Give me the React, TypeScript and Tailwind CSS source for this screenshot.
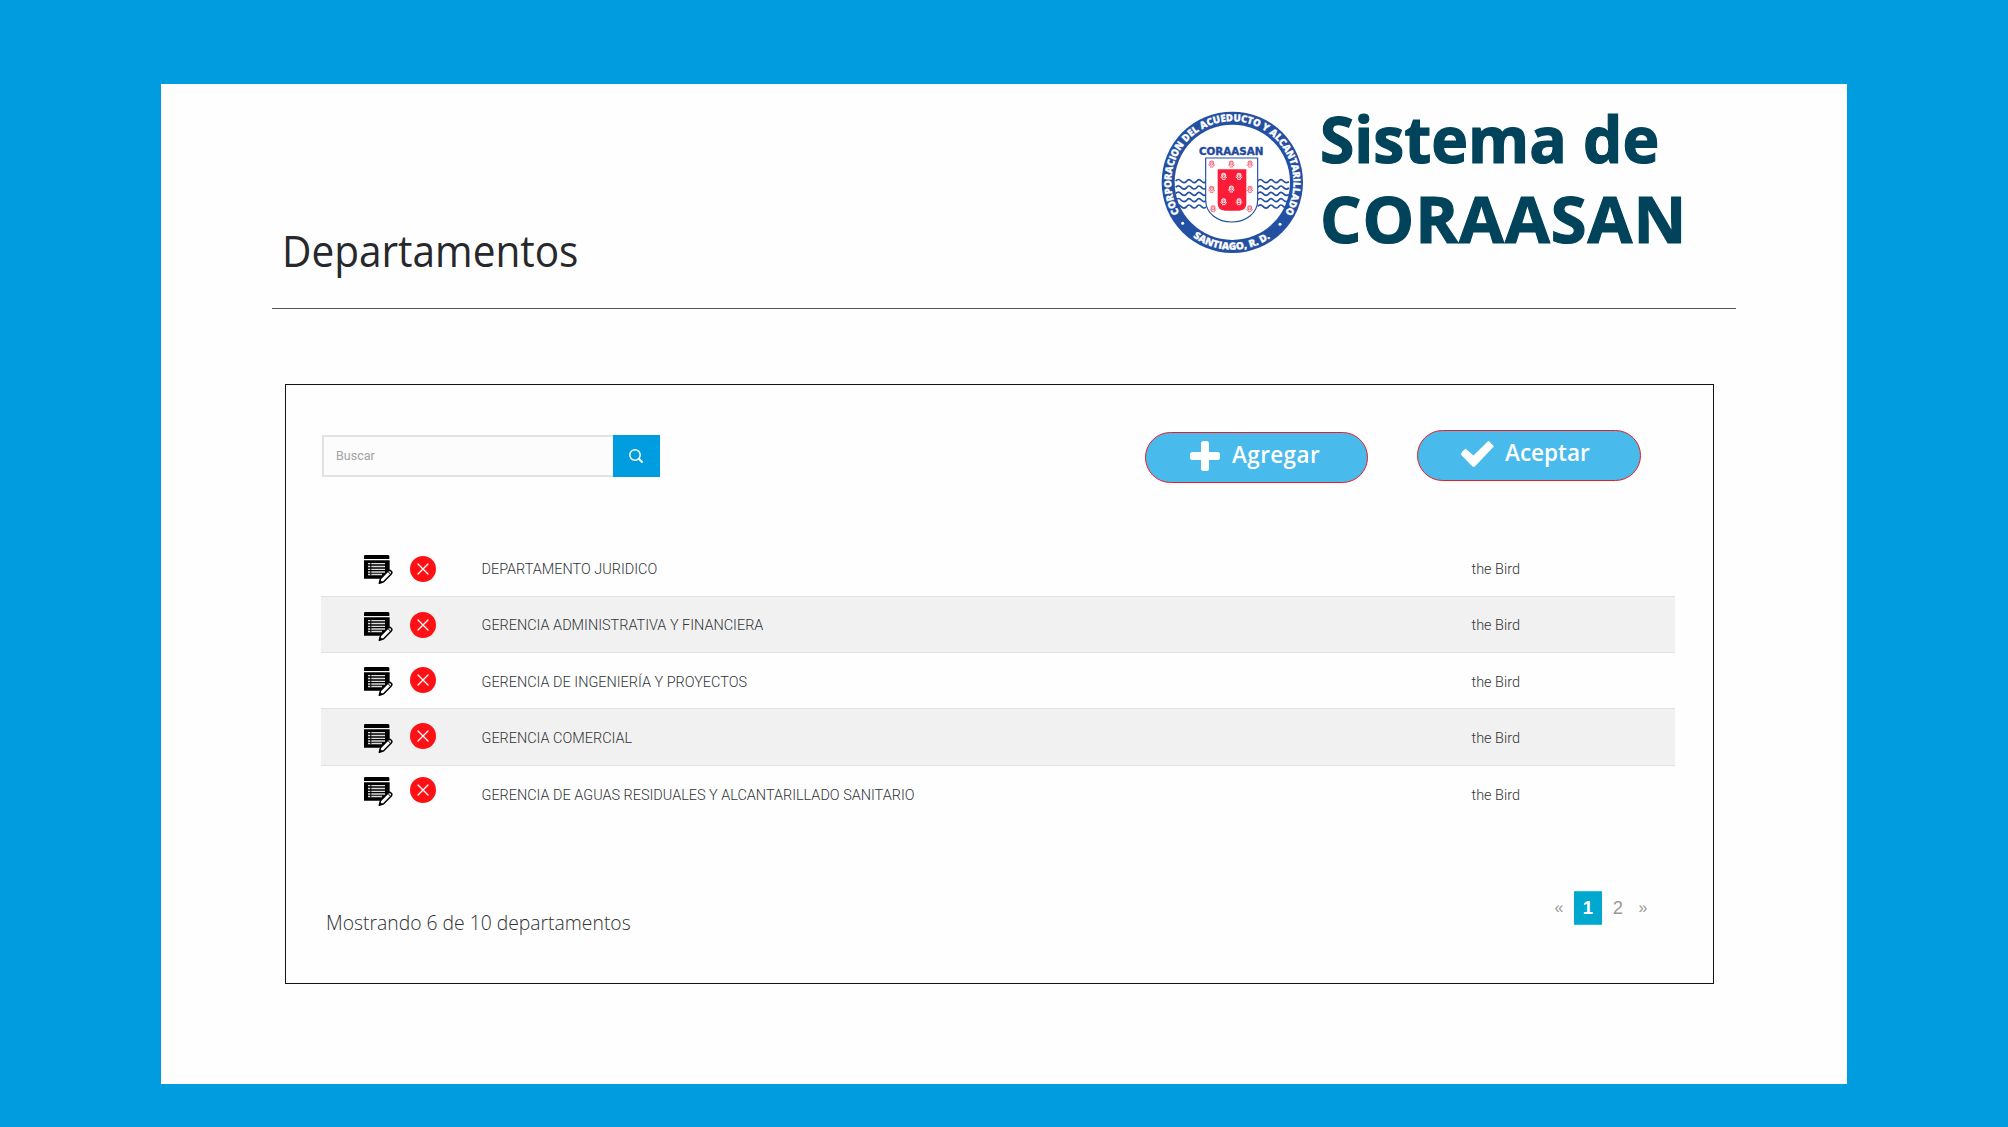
type Department = {
  name: string;
  owner: string;
  row: string;
  edit: string;
  remove: string;
  text: string;
};

const departments: Department[] = [
  {
    name: "DEPARTAMENTO JURIDICO",
    owner: "the Bird",
    row: "h-14 border-transparent",
    edit: "mt-[14px]",
    remove: "mt-[15px]",
    text: "mt-[19px]",
  },
  {
    name: "GERENCIA ADMINISTRATIVA Y FINANCIERA",
    owner: "the Bird",
    row: "h-14 border-[#dfe3e8] bg-[#f1f1f1]",
    edit: "mt-[15px]",
    remove: "mt-[15px]",
    text: "mt-[19px]",
  },
  {
    name: "GERENCIA DE INGENIERÍA Y PROYECTOS",
    owner: "the Bird",
    row: "h-14 border-[#dfe3e8]",
    edit: "mt-[14px]",
    remove: "mt-[14px]",
    text: "mt-[20px]",
  },
  {
    name: "GERENCIA COMERCIAL",
    owner: "the Bird",
    row: "h-[57px] border-[#dfe3e8] bg-[#f1f1f1]",
    edit: "mt-[15px]",
    remove: "mt-[14px]",
    text: "mt-[20px]",
  },
  {
    name: "GERENCIA DE AGUAS RESIDUALES Y ALCANTARILLADO SANITARIO",
    owner: "the Bird",
    row: "h-14 border-[#dfe3e8]",
    edit: "mt-[11px]",
    remove: "mt-[11px]",
    text: "mt-[20px]",
  },
];

const redShells = [
  [188, 192], [247, 192], [303, 192], [188, 268], [303, 268], [192, 326], [302, 326],
];
const whiteShells = [
  [224, 229], [270, 229], [247, 267], [224, 305], [270, 305],
];
const waveRows = [243, 262, 281, 300, 319];

function Shell({ x, y, color, hinge }: { x: number; y: number; color: string; hinge: string }) {
  return (
    <g transform={`translate(${x} ${y})`}>
      <circle cx="0" cy="-3" r="7.5" fill={color} />
      <path d="M-4 -5 L0 2 L4 -5 M0 -8 V2" stroke={hinge} strokeWidth="1.4" fill="none" />
      <path d="M-10 2 L-3 7 M10 2 L3 7 M-5 9 H5" stroke={color} strokeWidth="3" fill="none" />
    </g>
  );
}

function Emblem() {
  const family = "'Open Sans', 'Liberation Sans', sans-serif";
  return (
    <svg viewBox="36 33 426 426" className="-ml-px mt-[27px] size-[142px] shrink-0">
      <defs>
        <path id="ring-top" d="M91.6 338.5 A183 183 0 1 1 408.4 338.5" />
        <path id="ring-bottom" d="M130 410 A202 202 0 0 0 370 410" />
      </defs>
      <circle cx="250" cy="247" r="212" fill="#2450a4" />
      <circle cx="250" cy="247" r="173" fill="#fff" />
      <text fill="#fff" stroke="#fff" strokeWidth="0.8" fontFamily={family} fontWeight="800" fontSize="30">
        <textPath href="#ring-top" startOffset="0" textLength="768" lengthAdjust="spacingAndGlyphs">
          CORPORACION DEL ACUEDUCTO Y ALCANTARILLADO
        </textPath>
      </text>
      <text fill="#fff" stroke="#fff" strokeWidth="0.8" fontFamily={family} fontWeight="800" fontSize="30">
        <textPath href="#ring-bottom" startOffset="2" textLength="248" lengthAdjust="spacingAndGlyphs">
          SANTIAGO, R. D.
        </textPath>
      </text>
      <circle cx="101" cy="370" r="4.500" fill="#fff" />
      <circle cx="393" cy="373" r="4.500" fill="#fff" />
      <g fill="none" stroke="#2450a4" strokeWidth="5">
        {waveRows.map((y) => (
          <g key={y}>
            <path d={`M80 ${y} q8 -9 16 0 t16 2 q7 -11 15 -2 t15 2 q7 -11 15 -2 t14 2`} />
            <path d={`M326 ${y} q8 -9 16 0 t16 2 q7 -11 15 -2 t15 2 q7 -11 15 -2 t17 2`} />
          </g>
        ))}
      </g>
      <path
        d="M170 174 H326 V300 C326 342 288 366 248 366 C208 366 170 342 170 300 Z"
        fill="#fff"
        stroke="#2450a4"
        strokeWidth="3.500"
      />
      <path d="M206 208 H292 V310 Q292 332 270 332 H228 Q206 332 206 310 Z" fill="#fb1c38" />
      {redShells.map(([x, y]) => (
        <Shell key={`${x}-${y}`} x={x} y={y} color="#f5707f" hinge="#fff" />
      ))}
      {whiteShells.map(([x, y]) => (
        <Shell key={`${x}-${y}`} x={x} y={y} color="#ffe3e6" hinge="#fb1c38" />
      ))}
      <text
        x="150"
        y="166"
        fill="#1f4a9c"
        stroke="#1f4a9c"
        strokeWidth="1.2"
        fontFamily="'DejaVu Sans', sans-serif"
        fontWeight="700"
        fontSize="29"
        textLength="193"
        lengthAdjust="spacingAndGlyphs"
      >
        CORAASAN
      </text>
    </svg>
  );
}

function EditIcon() {
  return (
    <svg viewBox="0 0 87 87" className="size-[29px]">
      <path d="M0 12 V4 Q0 0 4 0 H72 Q76 0 76 4 V12 Z" fill="#000" />
      <path d="M0 16 H77 V60 L58 71 H0 Z" fill="#000" />
      <path
        d="M12 26 H63 M12 34.500 H63 M12 43 H63 M12 51 H63 M12 58.500 H54"
        stroke="#dadada"
        strokeWidth="4"
      />
      <path d="M20.500 24 V61" stroke="#000" strokeWidth="3" />
      <path
        d="M46 84.500 L49.500 71 L73 47.500 Q77 44.500 81 48 Q85.500 52 82.500 56 L59 80 Z"
        fill="#fff"
        stroke="#000"
        strokeWidth="4.500"
        strokeLinejoin="round"
      />
      <path d="M46 85 L48.500 75 L56 82 Z" fill="#000" />
      <path d="M72 50 L80 58" stroke="#000" strokeWidth="3" />
    </svg>
  );
}

function DeleteIcon() {
  return (
    <svg viewBox="0 0 26 26" className="size-[26px]">
      <circle cx="13" cy="13" r="13" fill="#fd1114" />
      <path d="M8 8 L18 18 M18 8 L8 18" stroke="#fff" strokeWidth="1.300" strokeLinecap="round" />
    </svg>
  );
}

function Header() {
  return (
    <header className="ml-[111px] flex h-[225px] w-[1464px] items-start border-b border-[#555558]">
      <div className="min-w-0 flex-1 pl-[10px] pt-[137px]">
        <h1 className="inline-block origin-left scale-x-[0.943] whitespace-nowrap font-['Open_Sans',sans-serif] text-[43px] font-normal leading-[60px] text-[#27282b]">
          Departamentos
        </h1>
      </div>
      <Emblem />
      <div className="ml-[17px] mr-9 mt-[14px] w-[380px] shrink-0 font-['Open_Sans',sans-serif] text-[65px] font-bold leading-[80px] text-[#01435a] [-webkit-text-stroke:1.2px_#01435a]">
        <div className="origin-left scale-x-[0.958] whitespace-nowrap">Sistema de</div>
        <div className="whitespace-nowrap tracking-[1px]">CORAASAN</div>
      </div>
    </header>
  );
}

function Toolbar() {
  return (
    <div className="ml-9 mr-[72px] flex items-start pt-[45px]">
      <div className="mt-[5px] flex h-[42px] w-[338px]">
        <div className="flex flex-1 items-center border-2 border-r-0 border-[#e2e2e2] bg-[#fcfcfc] pl-[12px] font-[Roboto,sans-serif] text-[12.5px] text-[#a3a3a3]">
          Buscar
        </div>
        <button className="flex w-[47px] items-center justify-center bg-[#009ce0] pr-px">
          <svg viewBox="0 0 14 14" className="size-[14px]" fill="none" stroke="#fff">
            <circle cx="6" cy="6" r="5.200" strokeWidth="1.500" />
            <path d="M9.800 9.800 L13 13" strokeWidth="2" strokeLinecap="round" />
          </svg>
        </button>
      </div>
      <div className="ml-auto flex items-start gap-[49px] font-['Open_Sans',sans-serif] text-[22.5px] font-semibold leading-[30px] text-white">
        <button className="mt-[2px] flex h-[51px] w-[223px] items-start rounded-full border border-[#ee1b24] bg-[#48baeb] pl-11">
          <svg viewBox="0 0 30 30" className="mt-2 size-[30px]" fill="#fff">
            <rect x="11" y="0" width="8" height="30" rx="2.500" />
            <rect x="0" y="11" width="30" height="8" rx="2.500" />
          </svg>
          <span className="ml-3 mt-[7px] tracking-[0.4px]">Agregar</span>
        </button>
        <button className="flex h-[51px] w-[224px] items-start rounded-full border border-[#ee1b24] bg-[#48baeb] pl-[43px]">
          <svg viewBox="0 0 33 26" className="mt-[10px] h-[26px] w-[33px]">
            <path
              d="M1.500 11.500 L4.500 8.500 L12.500 15.500 L27.500 0.800 L32 5.300 L13.300 25 L12 25 L0.800 13.500 Z"
              fill="#fff"
              stroke="#fff"
              strokeWidth="1.500"
              strokeLinejoin="round"
            />
          </svg>
          <span className="ml-[11px] mt-[7px]">Aceptar</span>
        </button>
      </div>
    </div>
  );
}

function DepartmentTable() {
  return (
    <div className="ml-[35px] mt-[57px] w-[1354px] font-[Roboto,sans-serif] text-[14.45px] font-[350] leading-5 text-[#303438]">
      {departments.map((d) => (
        <div
          key={d.name}
          className={`grid grid-cols-[46px_71.5px_990px_1fr] items-start border-t pl-[43px] ${d.row}`}
        >
          <button className={d.edit}>
            <EditIcon />
          </button>
          <button className={d.remove}>
            <DeleteIcon />
          </button>
          <span className={d.text}>{d.name}</span>
          <span className={d.text}>{d.owner}</span>
        </div>
      ))}
    </div>
  );
}

function Footer() {
  return (
    <div className="ml-[40px] mr-[61px] mt-[70px] flex items-start justify-between">
      <p className="mt-[17px] origin-left scale-x-[0.92] whitespace-nowrap font-['Open_Sans',sans-serif] text-[21px] font-light leading-7 text-[#2f3133]">
        Mostrando 6 de 10 departamentos
      </p>
      <nav className="flex h-[34px] items-center font-['Liberation_Sans',sans-serif] text-[18.5px] leading-[34px] text-[#999]">
        <span className="w-[30px] text-center text-[16px]">«</span>
        <span className="w-7 border-y border-[#2fc1dc] bg-[#00a7cf] text-center font-bold leading-8 text-white">
          1
        </span>
        <span className="w-8 text-center">2</span>
        <span className="w-[18px] text-center text-[16px]">»</span>
      </nav>
    </div>
  );
}

export default function App() {
  return (
    <div className="h-[1127px] w-[2008px] overflow-hidden bg-[#009ce0] pl-[161px] pt-[84px]">
      <main className="h-[1000px] w-[1686px] bg-[#fefefe]">
        <Header />
        <section className="ml-[124px] mt-[75px] h-[600px] w-[1429px] border border-[#141416]">
          <Toolbar />
          <DepartmentTable />
          <Footer />
        </section>
      </main>
    </div>
  );
}
